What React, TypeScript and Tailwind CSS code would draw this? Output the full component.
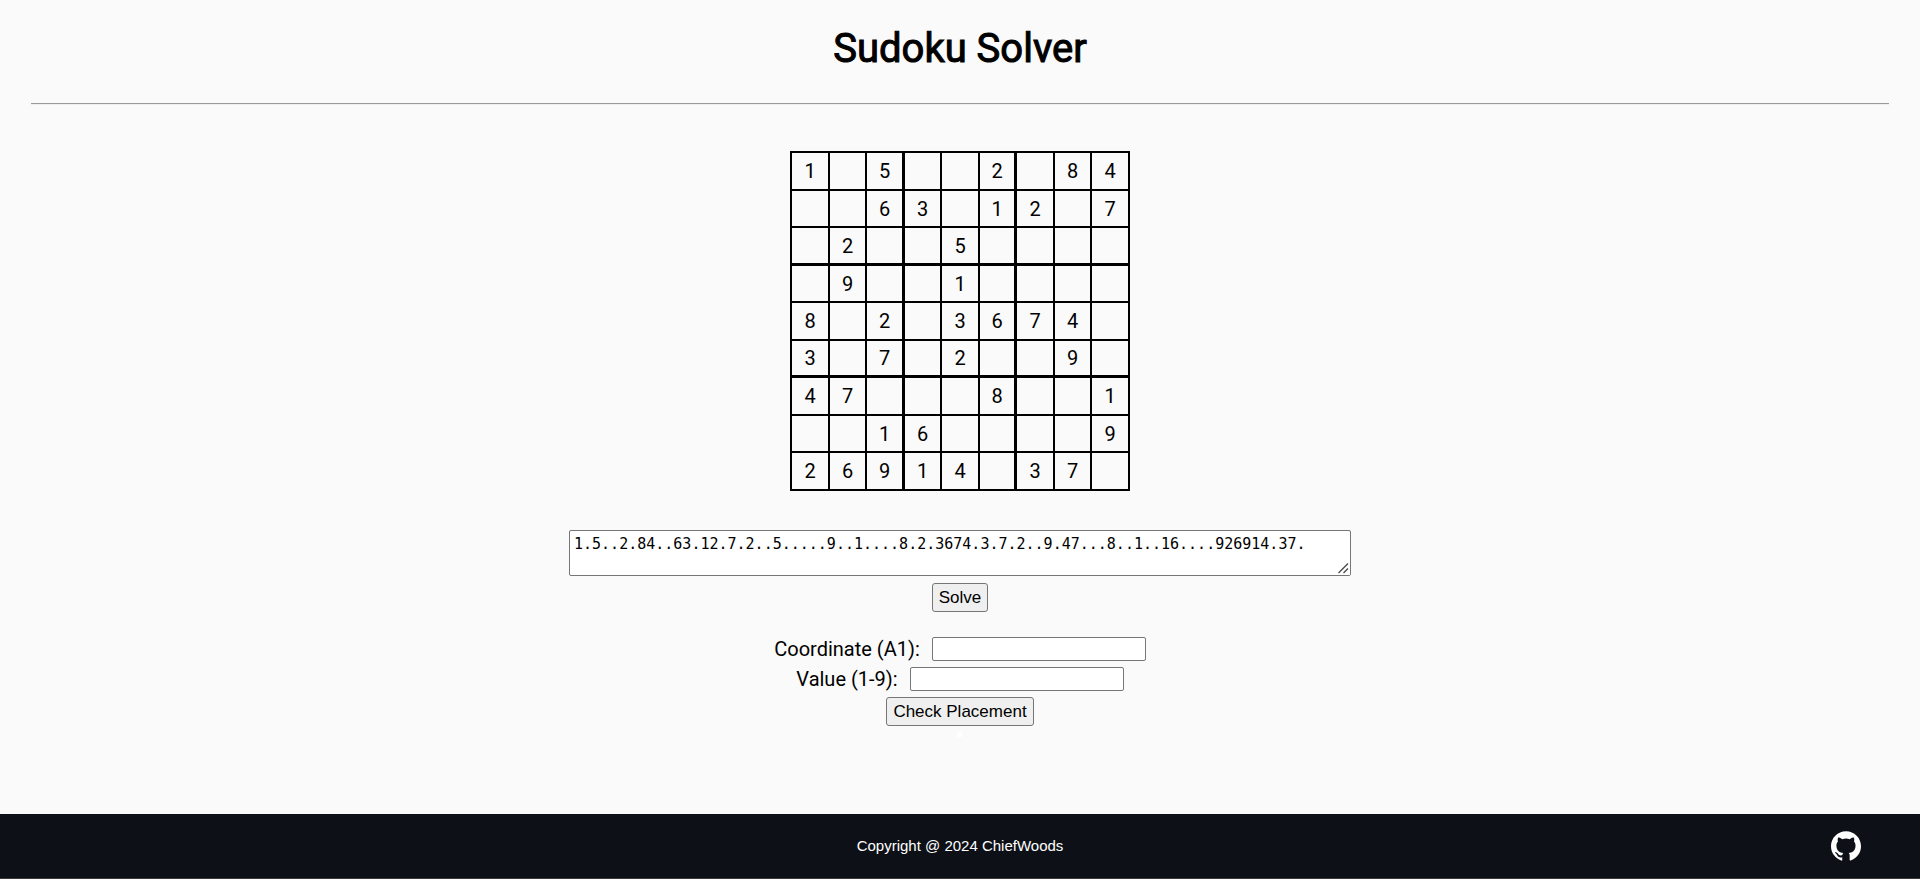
import { useState } from "react";
import { SiGithub } from "react-icons/si";

const SAMPLE =
  "1.5..2.84..63.12.7.2..5.....9..1....8.2.3674.3.7.2..9.47...8..1..16....926914.37.";

const INDICES = [0, 1, 2, 3, 4, 5, 6, 7, 8];

function cellStyle(row: number, col: number) {
  const right = col === 2 || col === 5 ? "border-r-3" : "border-r-2";
  const bottom = row === 2 || row === 5 ? "border-b-3" : "border-b-2";
  const width = col % 2 === 0 ? "w-[38px]" : "w-[37px]";
  const height = row % 2 === 0 ? "h-[38px]" : "h-[37px]";
  return `${right} ${bottom} ${width} ${height}`;
}

function Board({ puzzle }: { puzzle: string }) {
  return (
    <table className="w-[340px] table-fixed border-separate border-spacing-0 border-t-2 border-l-2 border-black text-xl leading-6">
      <tbody>
        {INDICES.map((row) => (
          <tr key={row}>
            {INDICES.map((col) => {
              const value = puzzle[row * 9 + col];
              return (
                <td
                  key={col}
                  className={`border-black p-0 text-center align-middle ${cellStyle(row, col)}`}
                >
                  {value && value !== "." ? value : ""}
                </td>
              );
            })}
          </tr>
        ))}
      </tbody>
    </table>
  );
}

const buttonStyle =
  "h-[29px] rounded-[3px] border border-[#767676] bg-[#efefef] px-[6px] font-['Liberation_Sans',Arial,sans-serif] text-[17px] leading-5";
const inputStyle =
  "h-6 w-[214px] rounded-[2px] border border-[#767676] bg-white px-1 text-base";

export default function App() {
  const [puzzle, setPuzzle] = useState(SAMPLE);

  return (
    <div className="flex min-h-screen flex-col bg-[#fafafa] font-[Roboto,sans-serif] text-black">
      <header className="px-[31px] pt-[25px]">
        <h1 className="text-center text-[40px] leading-12 font-normal [-webkit-text-stroke:1px_black]">
          Sudoku Solver
        </h1>
        <hr className="mt-[30px] h-[2px] border-t border-b border-t-[#9a9a9a] border-b-[#eeeeee]" />
      </header>

      <main className="flex grow flex-col items-center pt-[46px]">
        <Board puzzle={puzzle} />

        <form className="mt-[39px] flex flex-col items-center gap-[7px]" onSubmit={(e) => e.preventDefault()}>
          <div className="relative flex">
            <textarea
              aria-label="Puzzle"
              spellCheck={false}
              value={puzzle}
              onChange={(e) => setPuzzle(e.target.value)}
              className="h-[46px] w-[782px] resize rounded-[2px] border border-[#767676] bg-white px-1 py-[3px] font-['DejaVu_Sans_Mono',monospace] text-[15px] leading-5 [&::-webkit-resizer]:bg-white"
            />
            <svg
              className="pointer-events-none absolute right-[2px] bottom-[2px] size-3"
              viewBox="0 0 12 12"
              stroke="#4a4a4a"
              strokeWidth="1.3"
              aria-hidden="true"
            >
              <path d="M1.5 11 11 1.5M6.5 11 11 6.5" />
            </svg>
          </div>
          <button type="submit" className={buttonStyle}>
            Solve
          </button>
        </form>

        <form className="mt-[25px] flex flex-col items-center gap-[6px]" onSubmit={(e) => e.preventDefault()}>
          <div className="flex items-center gap-3">
            <label htmlFor="coord" className="text-xl leading-6">
              Coordinate (A1):
            </label>
            <input id="coord" type="text" className={inputStyle} />
          </div>
          <div className="flex items-center gap-3">
            <label htmlFor="val" className="text-xl leading-6">
              Value (1-9):
            </label>
            <input id="val" type="text" className={inputStyle} />
          </div>
          <button type="submit" className={buttonStyle}>
            Check Placement
          </button>
          <output className="h-[5px] w-[5px] bg-white" />
        </form>
      </main>

      <footer className="grid h-[65px] grid-cols-3 items-center border-b border-[#3d393b] bg-[#0d1117] px-[59px] font-['Liberation_Sans',Arial,sans-serif] text-[15px] text-white">
        <p className="col-start-2 text-center">Copyright @ 2024 ChiefWoods</p>
        <a href="https://github.com/ChiefWoods" aria-label="GitHub" className="justify-self-end">
          <SiGithub className="size-[30px]" />
        </a>
      </footer>
    </div>
  );
}
